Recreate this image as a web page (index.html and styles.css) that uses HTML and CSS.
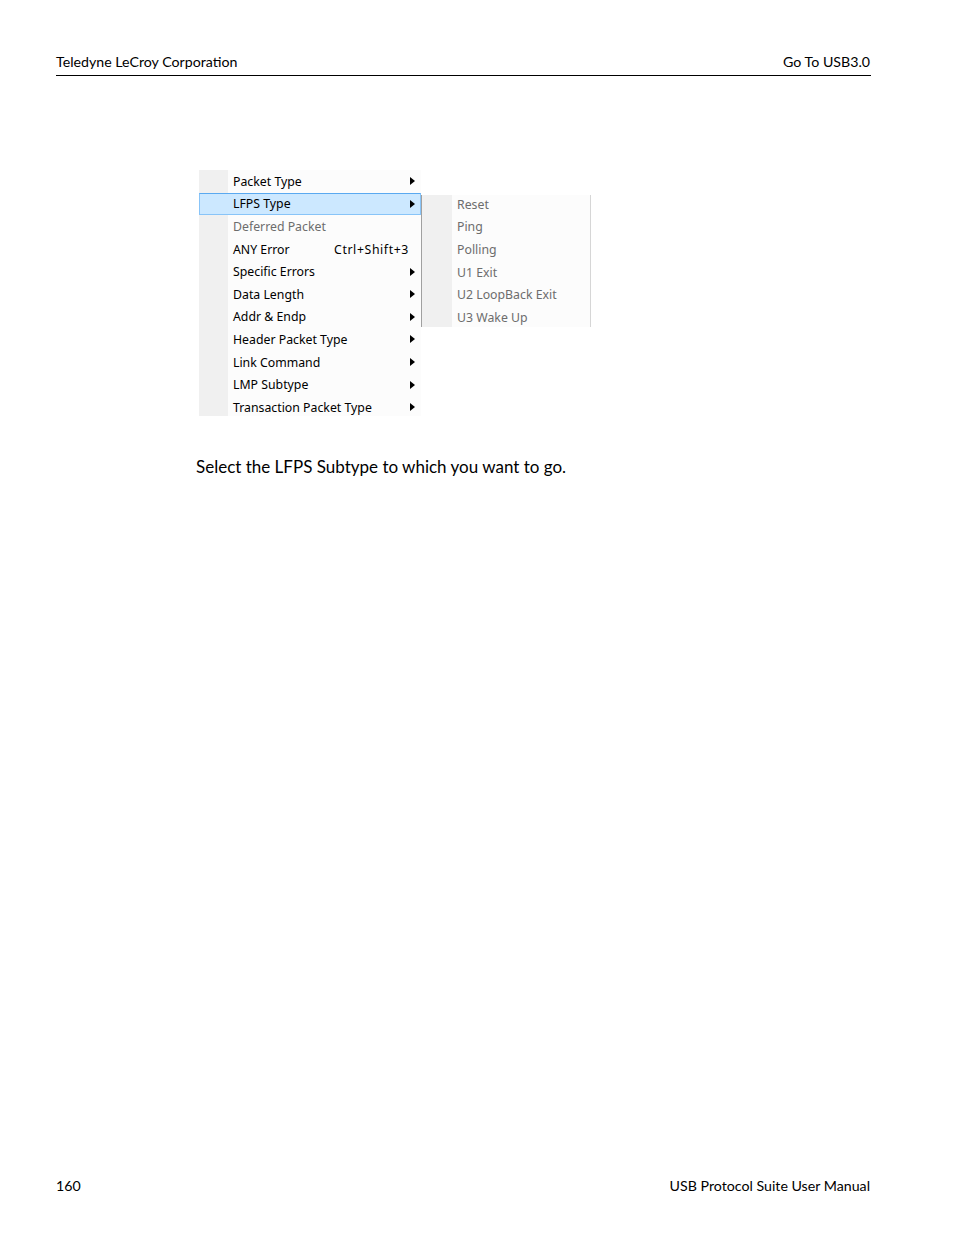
FILE: index.html
```html
<!DOCTYPE html>
<html>
<head>
<meta charset="utf-8">
<link rel="stylesheet" href="styles.css">
</head>
<body>
<div class="page">
  <header class="header">
    <span>Teledyne LeCroy Corporation</span>
    <span>Go To USB3.0</span>
  </header>

  <div class="menus">
    <div class="menu main">
      <div class="item"><span class="label">Packet Type</span><span class="arrow"></span></div>
      <div class="item hot"><span class="label">LFPS Type</span><span class="arrow"></span></div>
      <div class="item disabled"><span class="label">Deferred Packet</span></div>
      <div class="item"><span class="label">ANY Error</span><span class="shortcut">Ctrl+Shift+3</span></div>
      <div class="item"><span class="label">Specific Errors</span><span class="arrow"></span></div>
      <div class="item"><span class="label">Data Length</span><span class="arrow"></span></div>
      <div class="item"><span class="label">Addr &amp; Endp</span><span class="arrow"></span></div>
      <div class="item"><span class="label">Header Packet Type</span><span class="arrow"></span></div>
      <div class="item"><span class="label">Link Command</span><span class="arrow"></span></div>
      <div class="item"><span class="label">LMP Subtype</span><span class="arrow"></span></div>
      <div class="item"><span class="label">Transaction Packet Type</span><span class="arrow"></span></div>
    </div>
    <div class="menu sub">
      <div class="item disabled"><span class="label">Reset</span></div>
      <div class="item disabled"><span class="label">Ping</span></div>
      <div class="item disabled"><span class="label">Polling</span></div>
      <div class="item disabled"><span class="label">U1 Exit</span></div>
      <div class="item disabled"><span class="label">U2 LoopBack Exit</span></div>
      <div class="item disabled"><span class="label">U3 Wake Up</span></div>
    </div>
  </div>

  <p class="body-text">Select the LFPS Subtype to which you want to go.</p>

  <footer class="footer">
    <span>160</span>
    <span>USB Protocol Suite User Manual</span>
  </footer>
</div>
</body>
</html>
```

FILE: styles.css
```css
html, body {
  margin: 0;
  padding: 0;
  background: #ffffff;
}

.page {
  width: 954px;
  height: 1235px;
  display: flex;
  flex-direction: column;
  font-family: "Lato", "Open Sans", sans-serif;
  color: #000;
}

.header {
  display: flex;
  justify-content: space-between;
  margin: 0 83px 0 56px;
  padding: 53px 1px 5px 0;
  font-size: 14.2px;
  line-height: 17px;
  border-bottom: 1px solid #000;
}

.menus {
  display: flex;
  align-items: flex-start;
  margin: 94px 0 0 199px;
  font-family: "Noto Sans", "Open Sans", sans-serif;
  font-size: 12.3px;
}

.menu {
  background: linear-gradient(to right, #f0f0f0 0, #f0f0f0 29px, #fcfcfc 29px);
}

.main {
  width: 222px;
  height: 246px;
  overflow: hidden;
}

.sub {
  width: 168px;
  margin-top: 25px;
  border-left: 1px solid #a0a0a0;
  border-right: 1px solid #d6d6d6;
  height: 132px;
  overflow: hidden;
  background: linear-gradient(to right, #f0f0f0 0, #f0f0f0 30px, #fcfcfc 30px);
}

.item {
  height: 22.6px;
  display: flex;
  align-items: center;
  padding-left: 34px;
  padding-right: 6px;
  box-sizing: border-box;
  color: #000;
  white-space: nowrap;
}

.sub .item {
  padding-left: 35px;
}

.sub .item:first-child {
  margin-top: -2px;
}

.item .label {
  flex: 1;
}

.item.hot {
  background: #cce8ff;
  border: 1px solid #88c4f8;
  border-top-color: #5aa9f0;
  padding-left: 33px;
  padding-right: 5px;
}

.item.disabled {
  color: #6d6d6d;
}

.shortcut {
  margin-right: 6px;
  letter-spacing: 0.6px;
}

.arrow {
  width: 0;
  height: 0;
  border-left: 5px solid #000;
  border-top: 4.5px solid transparent;
  border-bottom: 4.5px solid transparent;
}

.body-text {
  margin: 41px 0 0 196px;
  font-size: 17px;
  line-height: 20px;
}

.footer {
  display: flex;
  justify-content: space-between;
  margin: auto 84px 41px 56px;
  font-size: 14.2px;
  line-height: 17px;
}
```
